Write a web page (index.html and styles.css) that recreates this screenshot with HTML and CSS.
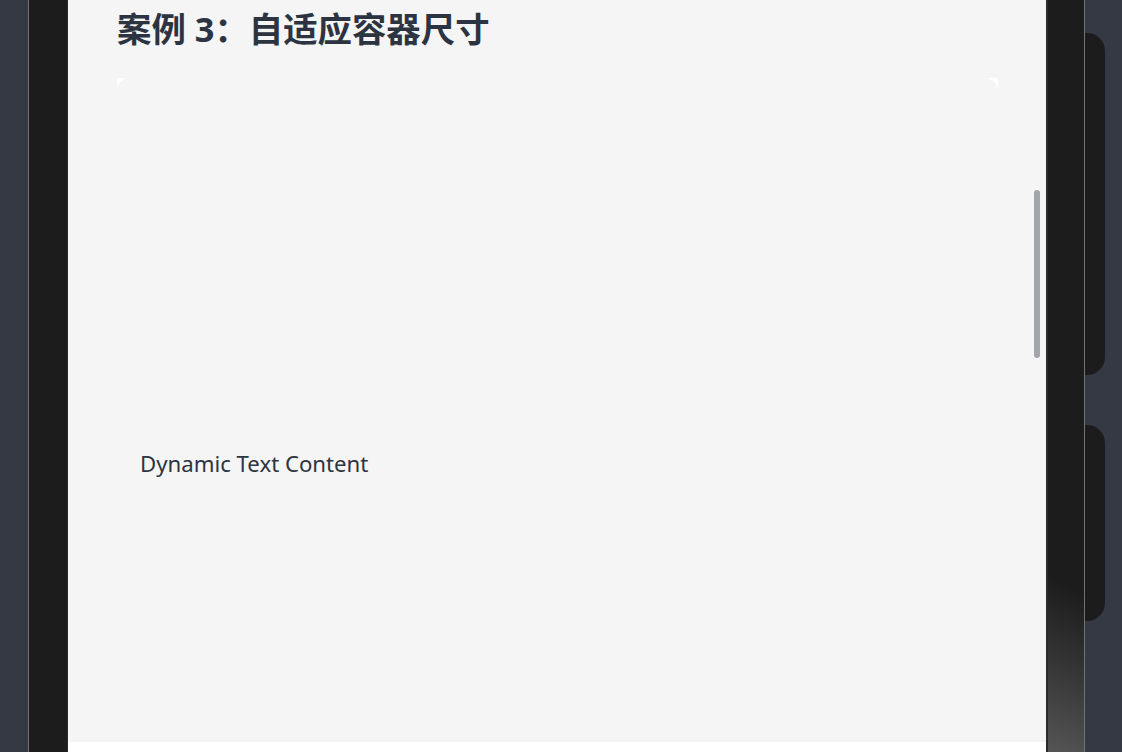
FILE: index.html
```html
<!DOCTYPE html>
<html lang="zh-CN">
<head>
<meta charset="utf-8">
<title>案例 3：自适应容器尺寸</title>
<link rel="stylesheet" href="styles.css">
</head>
<body>
<div class="side-left"></div>
<div class="device">
  <div class="bezel-l"></div>
  <div class="screen">
    <div class="screen-content">
      <h1 class="title">案例 3：自适应容器尺寸</h1>
      <div class="card">
        <div class="card-inner">
          <p class="dyn-text">Dynamic Text Content</p>
        </div>
      </div>
      <div class="scrollbar"></div>
    </div>
    <div class="screen-foot"></div>
  </div>
  <div class="bezel-r"></div>
</div>
<div class="side-right">
  <div class="pill pill-1"></div>
  <div class="pill pill-2"></div>
</div>
</body>
</html>
```
FILE: styles.css
```css
html, body {
  margin: 0;
  padding: 0;
}
body {
  width: 1122px;
  height: 752px;
  overflow: hidden;
  background: #343943;
  display: flex;
  font-family: "Noto Sans", "Noto Sans CJK SC", sans-serif;
}
.side-left {
  width: 28px;
  flex: none;
}
.device {
  flex: none;
  display: flex;
  width: 1055px;
  border-left: 1px solid #72726e;
  border-right: 1px solid #72726e;
  height: 752px;
}
.bezel-l {
  width: 38px;
  flex: none;
  background: #1c1c1c;
  border-right: 1px solid #2b2b2b;
}
.screen {
  width: 978px;
  flex: none;
  display: flex;
  flex-direction: column;
}
.screen-content {
  position: relative;
  height: 742px;
  flex: none;
  background: #f5f5f5;
  padding: 0 48px 0 49px;
  box-sizing: border-box;
  overflow: hidden;
}
.screen-foot {
  flex: 1;
  background: #ffffff;
}
.title {
  margin: 5px 0 0 0;
  font-size: 34.4px;
  line-height: 48px;
  font-weight: 700;
  color: #2c3441;
  letter-spacing: 0;
}
.card {
  margin-top: 25px;
  background: #ffffff;
  border-radius: 2px;
  height: 700px;
}
.card-inner {
  background: #f5f5f5;
  border-radius: 13px;
  height: 100%;
  padding: 371px 0 0 23px;
  box-sizing: border-box;
}
.dyn-text {
  margin: 0;
  font-size: 22.2px;
  line-height: 30px;
  color: #2c3441;
}
.scrollbar {
  position: absolute;
  left: 966px;
  top: 190px;
  width: 6px;
  height: 168px;
  border-radius: 3px;
  background: #a2a5ab;
}
.bezel-r {
  width: 36px;
  flex: none;
  border-left: 2px solid #2b2b2b;
  background: linear-gradient(205deg, #1c1c1c 77%, #333333 87%, #555555 100%);
}
.side-right {
  width: 37px;
  flex: none;
  padding-top: 33px;
  box-sizing: border-box;
}
.pill {
  width: 20px;
  background: #1c1c1c;
  border-radius: 0 18px 18px 0;
}
.pill-1 {
  height: 342px;
}
.pill-2 {
  height: 196px;
  margin-top: 50px;
}
```
